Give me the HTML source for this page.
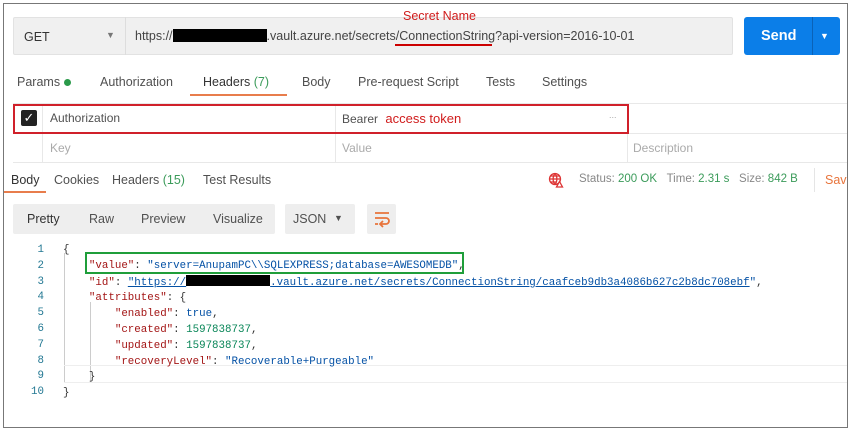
<!DOCTYPE html><html><head><style>
*{margin:0;padding:0;box-sizing:border-box}
body{width:850px;height:431px;background:#fff;position:relative;overflow:hidden;font-family:"Liberation Sans",sans-serif;font-size:12px;color:#505050}
.a{position:absolute;white-space:nowrap}
.m{font-family:"Liberation Mono",monospace;font-size:10.8px}
.k{color:#a31515}.s{color:#0451a5}.n{color:#098658}
.g{color:#3b9b5a}
</style></head><body>
<div class="a" style="left:3px;top:3px;width:845px;height:425px;border:1px solid #777"></div>
<div class="a" style="left:13px;top:17px;width:720px;height:38px;background:#f0f0f0;border:1px solid #e2e2e2;border-radius:2px"></div>
<div class="a" style="left:125px;top:17px;width:1px;height:38px;background:#ddd"></div>
<div class="a" style="left:24px;top:30px;font-size:12.5px;color:#333">GET</div>
<div class="a" style="left:106px;top:30px;font-size:9px;color:#777">▼</div>
<div class="a" style="left:135px;top:29px;font-size:12.5px;color:#444">https://<span style="display:inline-block;width:94px;height:13px;background:#000;vertical-align:-2px"></span>.vault.azure.net/secrets/ConnectionString?api-version=2016-10-01</div>
<div class="a" style="left:395px;top:44px;width:97px;height:2px;background:#c00"></div>
<div class="a" style="left:403px;top:9px;font-size:12.5px;color:#d01c1c">Secret Name</div>
<div class="a" style="left:744px;top:17px;width:96px;height:38px;background:#0b7ee8;border-radius:3px"></div>
<div class="a" style="left:812px;top:17px;width:1px;height:38px;background:#0a62b8"></div>
<div class="a" style="left:761px;top:28px;font-size:14.5px;font-weight:bold;color:#fff">Send</div>
<div class="a" style="left:820px;top:31px;font-size:9px;color:#fff">▼</div>
<div class="a" style="top:75px;left:17px;font-size:12.5px">Params <span style="display:inline-block;width:7px;height:7px;border-radius:50%;background:#2a9a4a"></span></div>
<div class="a" style="top:75px;left:100px;font-size:12.5px">Authorization</div>
<div class="a" style="top:75px;left:203px;font-size:12.5px;color:#333">Headers <span class="g">(7)</span></div>
<div class="a" style="top:75px;left:302px;font-size:12.5px">Body</div>
<div class="a" style="top:75px;left:358px;font-size:12.5px">Pre-request Script</div>
<div class="a" style="top:75px;left:486px;font-size:12.5px">Tests</div>
<div class="a" style="top:75px;left:542px;font-size:12.5px">Settings</div>
<div class="a" style="left:190px;top:94px;width:97px;height:2px;background:#e87d4c"></div>
<div class="a" style="left:13px;top:103px;width:834px;height:1px;background:#e8e8e8"></div>
<div class="a" style="left:13px;top:133px;width:834px;height:1px;background:#e8e8e8"></div>
<div class="a" style="left:13px;top:162px;width:834px;height:1px;background:#e8e8e8"></div>
<div class="a" style="left:42px;top:103px;width:1px;height:59px;background:#e8e8e8"></div>
<div class="a" style="left:335px;top:103px;width:1px;height:59px;background:#e8e8e8"></div>
<div class="a" style="left:627px;top:103px;width:1px;height:59px;background:#e8e8e8"></div>
<div class="a" style="left:13px;top:104px;width:616px;height:30px;border:2px solid #d0202a"></div>
<div class="a" style="left:21px;top:110px;width:16px;height:16px;background:#222;border-radius:2px;color:#fff;font-size:13px;line-height:16px;text-align:center">✓</div>
<div class="a" style="left:50px;top:111px;font-size:12px">Authorization</div>
<div class="a" style="left:342px;top:111px;font-size:12px">Bearer <span style="color:#d01c1c;font-size:13px;margin-left:4px">access token</span></div>
<div class="a" style="left:609px;top:110px;font-size:9px;color:#aaa">...</div>
<div class="a" style="left:50px;top:141px;color:#aaa">Key</div>
<div class="a" style="left:342px;top:141px;color:#aaa">Value</div>
<div class="a" style="left:633px;top:141px;color:#aaa">Description</div>
<div class="a" style="left:11px;top:173px;font-size:12.5px;color:#333">Body</div>
<div class="a" style="left:54px;top:173px;font-size:12.5px">Cookies</div>
<div class="a" style="left:112px;top:173px;font-size:12.5px">Headers <span class="g">(15)</span></div>
<div class="a" style="left:203px;top:173px;font-size:12.5px">Test Results</div>
<div class="a" style="left:4px;top:191px;width:42px;height:2px;background:#e87d4c"></div>
<svg class="a" style="left:548px;top:172px" width="16" height="16" viewBox="0 0 16 16" fill="none" stroke="#d33" stroke-width="1.3"><circle cx="7" cy="7" r="5.5"/><path d="M1.5 7h11M7 1.5c-2.5 3-2.5 8 0 11M7 1.5c2.5 3 2.5 8 0 11M2.5 4h9M2.5 10h6"/><path d="M11.5 9.5l3 5.5h-6z" fill="#fff"/></svg>
<div class="a" style="left:579px;top:173px;font-size:11.5px;color:#888">Status: <span class="g">200 OK</span>&nbsp;&nbsp;&nbsp;Time: <span class="g">2.31 s</span>&nbsp;&nbsp;&nbsp;Size: <span class="g">842 B</span></div>
<div class="a" style="left:814px;top:168px;width:1px;height:24px;background:#e5e5e5"></div>
<div class="a" style="left:825px;top:173px;font-size:12.5px;color:#e8743b">Sav</div>
<div class="a" style="left:13px;top:204px;width:262px;height:30px;background:#eee;border-radius:2px"></div>
<div class="a" style="left:27px;top:212px;font-size:12.5px;color:#333">Pretty</div>
<div class="a" style="left:89px;top:212px;font-size:12.5px">Raw</div>
<div class="a" style="left:141px;top:212px;font-size:12.5px">Preview</div>
<div class="a" style="left:213px;top:212px;font-size:12.5px">Visualize</div>
<div class="a" style="left:285px;top:204px;width:70px;height:30px;background:#eee;border-radius:2px"></div>
<div class="a" style="left:293px;top:212px;font-size:12.5px">JSON</div>
<div class="a" style="left:334px;top:213px;font-size:9px">▼</div>
<div class="a" style="left:367px;top:204px;width:29px;height:30px;background:#eee;border-radius:2px"></div>
<svg class="a" style="left:372px;top:209px" width="20" height="20" viewBox="0 0 20 20" fill="none" stroke="#e8743b" stroke-width="1.8"><path d="M3 4h14M3 9h11a3 3 0 0 1 0 6H9M11 12l-3 3 3 3M3 15h3"/></svg>
<div class="a" style="left:64px;top:253px;width:1px;height:130px;background:#ccc"></div>
<div class="a" style="left:90px;top:302px;width:1px;height:80px;background:#ccc"></div>
<div class="a" style="left:64px;top:365px;width:783px;height:18px;border-top:1px solid #eee;border-bottom:1px solid #eee"></div>
<div class="a m" style="left:0;top:243px;line-height:15.8px;color:#237893;width:44px;text-align:right">1<br>2<br>3<br>4<br>5<br>6<br>7<br>8<br>9<br>10</div>
<div class="a m" style="left:63px;top:243px;line-height:15.8px;color:#333">{<br>&nbsp;&nbsp;&nbsp;&nbsp;<span class="k">"value"</span>: <span class="s">"server=AnupamPC\\SQLEXPRESS;database=AWESOMEDB"</span>,<br>&nbsp;&nbsp;&nbsp;&nbsp;<span class="k">"id"</span>: <span class="s" style="text-decoration:underline">"https://<span style="display:inline-block;width:84px;height:11px;background:#000;vertical-align:-1px"></span>.vault.azure.net/secrets/ConnectionString/caafceb9db3a4086b627c2b8dc708ebf</span><span class="s">"</span>,<br>&nbsp;&nbsp;&nbsp;&nbsp;<span class="k">"attributes"</span>: {<br>&nbsp;&nbsp;&nbsp;&nbsp;&nbsp;&nbsp;&nbsp;&nbsp;<span class="k">"enabled"</span>: <span class="s">true</span>,<br>&nbsp;&nbsp;&nbsp;&nbsp;&nbsp;&nbsp;&nbsp;&nbsp;<span class="k">"created"</span>: <span class="n">1597838737</span>,<br>&nbsp;&nbsp;&nbsp;&nbsp;&nbsp;&nbsp;&nbsp;&nbsp;<span class="k">"updated"</span>: <span class="n">1597838737</span>,<br>&nbsp;&nbsp;&nbsp;&nbsp;&nbsp;&nbsp;&nbsp;&nbsp;<span class="k">"recoveryLevel"</span>: <span class="s">"Recoverable+Purgeable"</span><br>&nbsp;&nbsp;&nbsp;&nbsp;}<br>}</div>
<div class="a" style="left:85px;top:252px;width:379px;height:22px;border:2px solid #1f9e3a"></div>
</body></html>
